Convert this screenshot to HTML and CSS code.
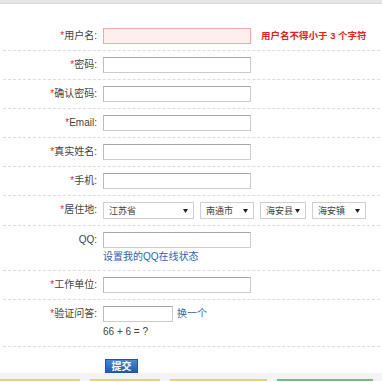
FILE: index.html
```html
<!DOCTYPE html>
<html>

<head>
	<meta charset="utf-8">
	<title>用户注册</title>
	<meta name="viewport" content="width=device-width, initial-scale=1.0">
	<link rel="stylesheet" href="styles.css">
</head>

<body>
	<div class="topbar"></div>

	<form class="reg" onsubmit="return false">
		<div class="row">
			<label class="lbl"><em>*</em>用户名:</label>
			<div class="field">
				<input type="text" class="txt invalid">
				<span class="err">用户名不得小于 3 个字符</span>
			</div>
		</div>

		<div class="row">
			<label class="lbl"><em>*</em>密码:</label>
			<div class="field"><input type="password" class="txt"></div>
		</div>

		<div class="row">
			<label class="lbl"><em>*</em>确认密码:</label>
			<div class="field"><input type="password" class="txt"></div>
		</div>

		<div class="row">
			<label class="lbl"><em>*</em>Email:</label>
			<div class="field"><input type="text" class="txt"></div>
		</div>

		<div class="row">
			<label class="lbl"><em>*</em>真实姓名:</label>
			<div class="field"><input type="text" class="txt"></div>
		</div>

		<div class="row">
			<label class="lbl"><em>*</em>手机:</label>
			<div class="field"><input type="text" class="txt"></div>
		</div>

		<div class="row">
			<label class="lbl"><em>*</em>居住地:</label>
			<div class="field selects">
				<div class="sel w-prov">江苏省<svg width="5" height="4" viewBox="0 0 5 4"><path d="M0 0h5L2.5 4z" fill="#222"/></svg></div>
				<div class="sel w-city">南通市<svg width="5" height="4" viewBox="0 0 5 4"><path d="M0 0h5L2.5 4z" fill="#222"/></svg></div>
				<div class="sel w-county">海安县<svg width="5" height="4" viewBox="0 0 5 4"><path d="M0 0h5L2.5 4z" fill="#222"/></svg></div>
				<div class="sel w-town">海安镇<svg width="5" height="4" viewBox="0 0 5 4"><path d="M0 0h5L2.5 4z" fill="#222"/></svg></div>
			</div>
		</div>

		<div class="row">
			<label class="lbl">QQ:</label>
			<div class="field stack">
				<input type="text" class="txt">
				<a href="#" class="link">设置我的QQ在线状态</a>
			</div>
		</div>

		<div class="row">
			<label class="lbl"><em>*</em>工作单位:</label>
			<div class="field"><input type="text" class="txt"></div>
		</div>

		<div class="row">
			<label class="lbl"><em>*</em>验证问答:</label>
			<div class="field stack">
				<div class="captcha">
					<input type="text" class="txt short">
					<a href="#" class="link">换一个</a>
				</div>
				<span class="question">66 + 6 = ?</span>
			</div>
		</div>

		<div class="actions">
			<button type="submit" class="submit">提交</button>
		</div>
	</form>

	<div class="footer">
		<span class="tab orange t1"></span>
		<span class="tab orange t2"></span>
		<span class="tab orange t3"></span>
		<span class="tab green t4"></span>
	</div>
</body>

</html>
```

FILE: styles.css
```css
:root {
	--text: #444;
	--red: #e02b2b;
	--link: #2f64a8;
	--line: #dcdcdc;
}

body {
	margin: 0;
	background: #fff;
	color: var(--text);
	font: 10px/14px 'Liberation Sans', 'Noto Sans CJK SC', sans-serif;
}

.topbar {
	height: 3px;
	background: #e6e6e6;
	border-bottom: 1px solid #dadada;
}

.reg {
	margin: 18px 2px 0 3px;
}

.row {
	display: grid;
	grid-template-columns: 94px 1fr;
	column-gap: 6px;
	padding: 6px 0;
	border-bottom: 1px dashed var(--line);
}

.lbl {
	text-align: right;
	line-height: 16px;
	color: #444;
}

.lbl em {
	font-style: normal;
	color: var(--red);
}

.field {
	display: flex;
	align-items: center;
	gap: 10px;
}

.field.stack {
	flex-direction: column;
	align-items: flex-start;
	gap: 2px;
}

.txt {
	box-sizing: border-box;
	width: 148px;
	height: 16px;
	margin: 0;
	padding: 0 3px;
	border: 1px solid #ccc;
	border-top-color: #a8a8a8;
	border-left-color: #bbb;
	font: inherit;
	outline: none;
}

.txt.invalid {
	background: #fdefee;
	border-color: #f2a8a6;
}

.txt.short {
	width: 70px;
}

.err {
	color: #d9251f;
	font-weight: bold;
	font-size: 9.5px;
	white-space: nowrap;
}

.selects {
	gap: 6px;
}

.sel {
	box-sizing: border-box;
	height: 17px;
	display: flex;
	align-items: center;
	justify-content: space-between;
	padding: 0 5px 0 5px;
	border: 1px solid #cfcfcf;
	color: #444;
	background: #fff;
	font-size: 9px;
	white-space: nowrap;
}

.w-prov {
	width: 91px;
}

.w-city {
	width: 54px;
}

.w-county {
	width: 46px;
}

.w-town {
	width: 54px;
}

.link {
	color: var(--link);
	text-decoration: none;
}

.captcha {
	display: flex;
	align-items: center;
	gap: 4px;
}

.question {
	color: #444;
	line-height: 16px;
}

.actions {
	padding: 12px 0 0 102px;
}

.submit {
	display: block;
	width: 33px;
	height: 14px;
	padding: 0;
	border: 1px solid #1d55a0;
	background: linear-gradient(#4a86d4, #1f5cab);
	color: #fff;
	font: bold 10px/12px 'Noto Sans CJK SC', sans-serif;
	cursor: pointer;
}

.footer {
	height: 2px;
	background: #f3f3f3;
	display: flex;
	gap: 10px;
	padding-top: 6px;
}

.tab {
	height: 2px;
}

.orange {
	background: #f2cc7d;
}

.green {
	background: #6dbf7c;
}

.t1 {
	width: 80px;
}

.t2 {
	width: 70px;
}

.t3 {
	width: 97px;
}

.t4 {
	width: 96px;
}
```
